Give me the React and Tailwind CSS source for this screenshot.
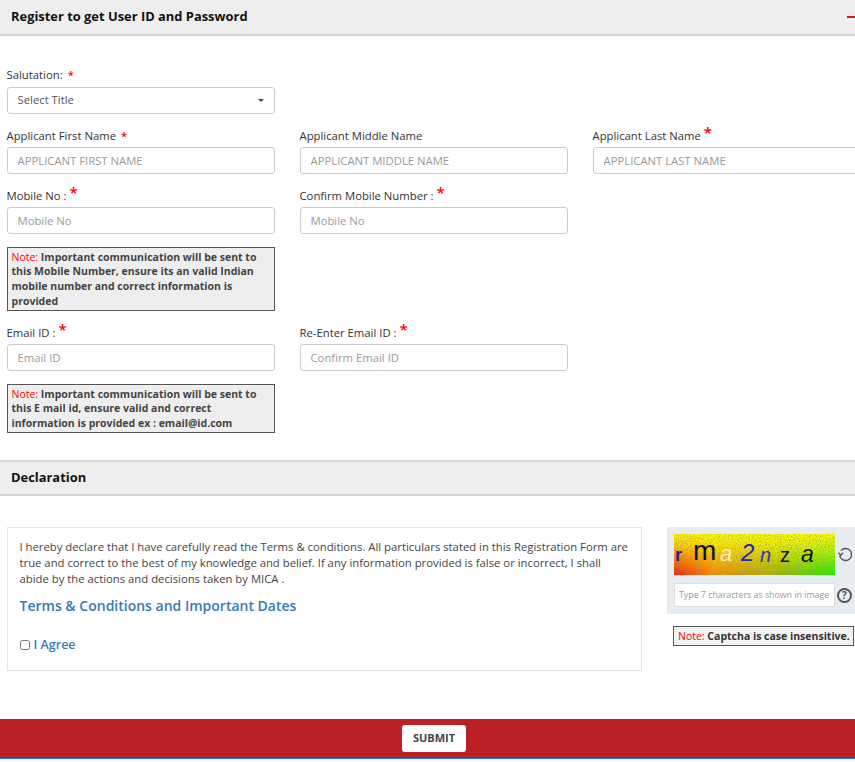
const Star = ({ big }) => (
  <span className={big ? "text-[#f00] text-[15px] leading-[12px] font-semibold ml-[3px] relative top-[-2px]" : "text-[#f00] font-semibold ml-[5px]"}>*</span>
);

const Field = ({ label, placeholder, big, className = "" }) => (
  <div className={`w-[268.5px] shrink-0 ${className}`}>
    <label className="block h-[20px] text-[11.3px] leading-[18px] text-[#333]">
      {label}
      <Star big={big} />
    </label>
    <input
      placeholder={placeholder}
      className="block w-full h-[27px] px-[10px] bg-white border border-[#ccc] rounded-[3px] text-[11.3px] outline-none placeholder:text-[#999]"
    />
  </div>
);

const Note = ({ children }) => (
  <div className="w-[268.5px] mt-[13px] px-[4px] py-[1.5px] bg-[#eee] border border-[#555] text-[10.5px] leading-[14.75px] font-bold text-[#444]">
    <span className="text-[#f00] font-normal">Note:</span> {children}
  </div>
);

const SectionHead = ({ title, children, className = "h-[35.5px]" }) => (
  <div className={`flex items-center justify-between pl-[11px] bg-[#eee] border-b-2 border-[#d4d4d4] text-[12.9px] font-bold text-[#111] ${className}`}>
    {title}
    {children}
  </div>
);

const App = () => {
  return (
    <div className="w-[855px] h-[762px] overflow-hidden bg-white" style={{ fontFamily: '"Open Sans", sans-serif' }}>
      <SectionHead title="Register to get User ID and Password">
        <span className="w-[8px] h-[2px] bg-[#c4202a]"></span>
      </SectionHead>

      <div className="pl-[6.5px] pt-[29px]">
        <div className="w-[268.5px]">
          <label className="block h-[22.5px] text-[11.3px] leading-[20px] text-[#333]">
            Salutation:
            <Star />
          </label>
          <div className="flex items-center justify-between h-[27px] pl-[10px] pr-[10px] bg-white border border-[#ccc] rounded-[3px] text-[11.3px] text-[#555]">
            Select Title
            <span className="w-0 h-0 border-x-[3px] border-x-transparent border-t-[3px] border-t-[#444]"></span>
          </div>
        </div>

        <div className="flex gap-[24.5px] mt-[13px]">
          <Field label="Applicant First Name" placeholder="APPLICANT FIRST NAME" />
          <Field label="Applicant Middle Name" placeholder="APPLICANT MIDDLE NAME" className="[&_span]:hidden" />
          <Field label="Applicant Last Name" placeholder="APPLICANT LAST NAME" big />
        </div>

        <div className="flex gap-[24.5px] mt-[13px]">
          <div>
            <Field label="Mobile No :" placeholder="Mobile No" big />
            <Note>
              Important communication will be sent to this Mobile Number, ensure its an valid Indian mobile number and
              correct information is provided
            </Note>
          </div>
          <Field label="Confirm Mobile Number :" placeholder="Mobile No" big />
        </div>

        <div className="flex gap-[24.5px] mt-[13px]">
          <div>
            <Field label="Email ID :" placeholder="Email ID" big />
            <Note>
              Important communication will be sent to this E mail id, ensure valid and correct information is provided
              ex : email@id.com
            </Note>
          </div>
          <Field label="Re-Enter Email ID :" placeholder="Confirm Email ID" big />
        </div>
      </div>

      <div className="mt-[26.5px] border-t-2 border-[#d9d9d9]">
        <SectionHead title="Declaration" className="h-[34px]" />
      </div>

      <div className="flex items-start pl-[6.5px] mt-[31px]">
        <div className="w-[635px] h-[144px] shrink-0 pl-[12px] pr-[10px] pt-[11px] border border-[#e5e5e5] text-[11.3px] leading-[16px] text-[#444]">
          <p>
            I hereby declare that I have carefully read the Terms &amp; conditions. All particulars stated in this
            Registration Form are true and correct to the best of my knowledge and belief. If any information provided
            is false or incorrect, I shall abide by the actions and decisions taken by MICA .
          </p>
          <a className="block mt-[9px] text-[14px] leading-[20px] font-semibold text-[#337ab7]">
            Terms &amp; Conditions and Important Dates
          </a>
          <label className="flex items-center mt-[19px] text-[12.5px] leading-[20px] font-semibold text-[#337ab7]">
            <input type="checkbox" className="w-[10px] h-[10px] mr-[4px]" />I Agree
          </label>
        </div>

        <div className="ml-[25.5px] w-[188px] shrink-0">
          <div className="h-[87px] pl-[7px] pt-[7px] bg-[#e6ecef]">
            <div className="flex items-center">
              <div className="relative w-[161px] h-[41px] overflow-hidden">
                <div className="absolute inset-0 bg-[linear-gradient(to_right,#ff1000_0%,#ff8800_25%,#a8b000_60%,#18f000_100%)]"></div>
                <div className="absolute inset-0 bg-[linear-gradient(to_bottom,#ffff00_0%,#ffff00cc_25%,#ffff0000_100%)]"></div>
                <svg className="absolute inset-0" width="161" height="41">
                  <filter id="speckle">
                    <feTurbulence type="fractalNoise" baseFrequency="0.9" numOctaves="2" seed="4" />
                    <feColorMatrix values="0 0 0 0 0.35  0 0 0 0 0.3  0 0 0 0 0.1  1.8 0 0 0 -0.75" />
                  </filter>
                  <rect width="161" height="41" filter="url(#speckle)" />
                </svg>
                <div className="absolute inset-0 font-['Liberation_Sans',sans-serif] leading-none">
                  <span className="absolute left-[1px] top-[12px] text-[18px] font-bold text-[#2222aa]">r</span>
                  <span className="absolute left-[19px] top-[3px] text-[28px] text-[#111]">m</span>
                  <span className="absolute left-[46px] top-[9px] text-[22px] italic text-[#f4efc0]">a</span>
                  <span className="absolute left-[67px] top-[7px] text-[24px] italic text-[#2222cc]">2</span>
                  <span className="absolute left-[86px] top-[11px] text-[20px] italic text-[#3333bb]">n</span>
                  <span className="absolute left-[106px] top-[11px] text-[20px] text-[#111]">z</span>
                  <span className="absolute left-[127px] top-[9px] text-[23px] italic text-[#111]">a</span>
                </div>
              </div>
              <svg className="ml-[2px]" width="16" height="16" viewBox="0 0 24 24" fill="none" stroke="#555" strokeWidth="2">
                <path d="M6 7a9 9 0 1 1-2 7" />
                <path d="M2 10l4 4 3-4" fill="none" />
              </svg>
            </div>
            <div className="flex items-center mt-[8px]">
              <input
                placeholder="Type 7 characters as shown in image"
                className="w-[161px] h-[24px] px-[4px] bg-white border border-[#ddd] text-[8.8px] outline-none placeholder:text-[#999]"
              />
              <span className="ml-[2px] mt-[2px] flex items-center justify-center w-[15px] h-[15px] rounded-full border-2 border-[#555] text-[10px] font-bold text-[#555]">
                ?
              </span>
            </div>
          </div>
          <div className="mt-[12px] ml-[6px] w-[181px] h-[20px] pl-[4px] border border-[#555] bg-[#f2f2f2] text-[10.5px] leading-[18px] font-bold text-[#333] whitespace-nowrap">
            <span className="text-[#f00] font-normal">Note:</span> Captcha is case insensitive.
          </div>
        </div>
      </div>

      <div className="flex items-center justify-center h-[40.5px] mt-[48px] bg-[#bb2025] border-b-[1.5px] border-[#0b7dd8]">
        <button type="button" className="ml-[13px] w-[64px] h-[27px] bg-white rounded-[3px] text-[11px] font-bold text-[#444]">
          SUBMIT
        </button>
      </div>
    </div>
  );
};

export default App;
